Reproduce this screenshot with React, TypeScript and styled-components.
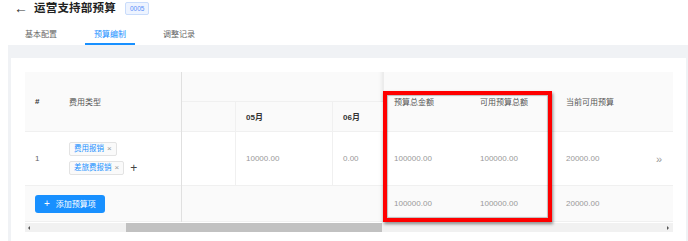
import React from 'react'
import styled, { createGlobalStyle } from 'styled-components'

const GlobalStyle = createGlobalStyle`
  body {
    margin: 0;
    background: #fff;
    font-family: "Liberation Sans", "Noto Sans CJK SC", sans-serif;
  }
`

const Page = styled.div`
  width: 688px;
  height: 241px;
  overflow: hidden;
  background: #fff;
`

const Header = styled.div`
  padding-top: 2px;
  height: 43px;
`

const TitleRow = styled.div`
  display: flex;
  align-items: center;
  height: 13px;
  padding-left: 14px;
`

const BackArrow = styled.span`
  font-size: 14px;
  line-height: 13px;
  color: #333;
  margin-right: 6px;
`

const Title = styled.h1`
  margin: 0;
  font-size: 11.5px;
  line-height: 13px;
  font-weight: 700;
  color: #222;
  letter-spacing: 0.2px;
`

const Badge = styled.span`
  margin-left: 9px;
  height: 11px;
  padding: 0 4px;
  border: 1px solid #c9dcfb;
  border-radius: 2px;
  background: #eef4ff;
  color: #5b8ff9;
  font-size: 6.5px;
  line-height: 11px;
`

const Tabs = styled.div`
  display: flex;
  gap: 19px;
  margin-top: 11px;
  padding-left: 16px;
`

const Tab = styled.div<{ active?: boolean }>`
  padding: 0 9px;
  height: 17px;
  line-height: 17px;
  font-size: 8px;
  color: ${({ active }) => (active ? '#1890ff' : '#666')};
  border-bottom: 2px solid ${({ active }) => (active ? '#1890ff' : 'transparent')};
`

const Content = styled.div`
  margin-left: 8px;
  padding: 13px 2px 0 3px;
  height: 183px;
  background: #f0f2f5;
`

const Card = styled.div`
  position: relative;
  height: 183px;
  padding: 14px 13px 0 14px;
  background: #fff;
`

const Table = styled.table`
  width: 648px;
  table-layout: fixed;
  border-collapse: separate;
  border-spacing: 0;
  font-size: 8px;
`

const fixedEdge = (fixed?: 'left' | 'right') =>
  fixed === 'left'
    ? `border-right: 1px solid #ececec;
  &::after { content: ''; position: absolute; top: 0; bottom: -1px; right: -5px; width: 5px; box-shadow: inset 5px 0 5px -5px rgba(0,0,0,0.12); }`
    : fixed === 'right'
    ? `border-left: 1px solid #ececec;
  &::before { content: ''; position: absolute; top: 0; bottom: -1px; left: -6px; width: 5px; box-shadow: inset -5px 0 5px -5px rgba(0,0,0,0.12); }`
    : ''

const Th = styled.th<{ bold?: boolean; divider?: boolean; fixed?: 'left' | 'right' }>`
  position: relative;
  padding: 0 0 0 10px;
  text-align: left;
  font-weight: ${({ bold }) => (bold ? 700 : 400)};
  color: ${({ bold }) => (bold ? '#333' : '#555')};
  background: #fafafa;
  border-bottom: 1px solid #f0f0f0;
  border-left: ${({ divider }) => (divider ? '1px solid #f0f0f0' : 'none')};
  ${({ fixed }) => fixedEdge(fixed)}
`

const Td = styled.td<{ summary?: boolean; divider?: boolean; fixed?: 'left' | 'right'; muted?: boolean }>`
  position: relative;
  padding: 0 0 0 10px;
  color: ${({ muted }) => (muted ? '#999' : '#666')};
  background: ${({ summary }) => (summary ? '#fafafa' : '#fff')};
  border-bottom: 1px solid #f0f0f0;
  border-left: ${({ divider }) => (divider ? '1px solid #f0f0f0' : 'none')};
  ${({ fixed }) => fixedEdge(fixed)}
`

const Row = styled.tr<{ h: number }>`
  height: ${({ h }) => h}px;
`

const TagCell = styled.div`
  display: flex;
  align-items: flex-end;
  gap: 6px;
`

const TagList = styled.div`
  display: flex;
  flex-direction: column;
  align-items: flex-start;
  gap: 5px;
`

const Tag = styled.span`
  display: inline-flex;
  align-items: center;
  gap: 3px;
  height: 12px;
  padding: 0 4px;
  border: 1px solid #e3e3e3;
  border-radius: 2px;
  background: #fafafa;
  color: #1890ff;
  font-size: 7.5px;
  line-height: 12px;

  i {
    font-style: normal;
    color: #999;
    font-size: 8px;
  }
`

const AddTag = styled.span`
  font-size: 12px;
  line-height: 12px;
  color: #444;
  margin-bottom: 1px;
`

const AddButton = styled.button`
  display: inline-flex;
  align-items: center;
  gap: 6px;
  height: 18px;
  width: 70px;
  padding: 0 0 0 9px;
  border: none;
  border-radius: 3px;
  background: #1890ff;
  color: #fff;
  font-family: inherit;
  font-size: 8px;

  b {
    font-weight: 400;
    font-size: 10px;
    line-height: 10px;
  }
`

const More = styled.span`
  font-size: 11px;
  color: #999;
`

const Scrollbar = styled.div`
  display: flex;
  align-items: center;
  width: 648px;
  height: 9px;
  margin-top: 1px;
  background: #f1f1f1;
`

const ScrollArrow = styled.span<{ dir: 'left' | 'right' }>`
  width: 0;
  height: 0;
  margin: ${({ dir }) => (dir === 'left' ? '0 0 0 3px' : '0 4px 0 auto')};
  border-top: 2px solid transparent;
  border-bottom: 2px solid transparent;
  ${({ dir }) => (dir === 'left' ? 'border-right: 2px solid #555;' : 'border-left: 2px solid #555;')}
`

const Thumb = styled.span`
  width: 256px;
  height: 9px;
  margin-left: 96px;
  background: #c1c1c1;
`

const Highlight = styled.div`
  position: absolute;
  left: 372px;
  top: 33px;
  width: 169px;
  height: 131px;
  box-sizing: border-box;
  border: 4px solid #ff0000;
  box-shadow: 1px 2px 3px rgba(0, 0, 0, 0.45), inset 0 0 1px 1px rgba(0, 0, 0, 0.25);
  pointer-events: none;
`

const cols = [34, 123, 53, 97, 51, 87, 86, 90, 27]

export default function App() {
  return (
    <Page>
      <GlobalStyle />
      <Header>
        <TitleRow>
          <BackArrow>←</BackArrow>
          <Title>运营支持部预算</Title>
          <Badge>0005</Badge>
        </TitleRow>
        <Tabs>
          <Tab>基本配置</Tab>
          <Tab active>预算编制</Tab>
          <Tab>调整记录</Tab>
        </Tabs>
      </Header>
      <Content>
        <Card>
          <Table>
            <colgroup>
              {cols.map((w, i) => (
                <col key={i} style={{ width: w }} />
              ))}
            </colgroup>
            <thead>
              <Row h={30}>
                <Th rowSpan={2} bold>#</Th>
                <Th rowSpan={2} fixed="left">费用类型</Th>
                <Th colSpan={3} />
                <Th rowSpan={2} fixed="right">预算总金额</Th>
                <Th rowSpan={2}>可用预算总额</Th>
                <Th rowSpan={2}>当前可用预算</Th>
                <Th rowSpan={2} />
              </Row>
              <Row h={30}>
                <Th />
                <Th bold divider>05月</Th>
                <Th bold divider>06月</Th>
              </Row>
            </thead>
            <tbody>
              <Row h={54}>
                <Td>1</Td>
                <Td fixed="left">
                  <TagCell>
                    <TagList>
                      <Tag>费用报销<i>×</i></Tag>
                      <Tag>差旅费报销<i>×</i></Tag>
                    </TagList>
                    <AddTag>+</AddTag>
                  </TagCell>
                </Td>
                <Td />
                <Td muted divider>10000.00</Td>
                <Td muted divider>0.00</Td>
                <Td muted fixed="right">100000.00</Td>
                <Td muted>100000.00</Td>
                <Td muted>20000.00</Td>
                <Td muted><More>»</More></Td>
              </Row>
              <Row h={36}>
                <Td summary colSpan={2} fixed="left">
                  <AddButton><b>+</b>添加预算项</AddButton>
                </Td>
                <Td summary colSpan={3} />
                <Td summary muted fixed="right">100000.00</Td>
                <Td summary muted>100000.00</Td>
                <Td summary muted>20000.00</Td>
                <Td summary />
              </Row>
            </tbody>
          </Table>
          <Scrollbar>
            <ScrollArrow dir="left" />
            <Thumb />
            <ScrollArrow dir="right" />
          </Scrollbar>
          <Highlight />
        </Card>
      </Content>
    </Page>
  )
}
